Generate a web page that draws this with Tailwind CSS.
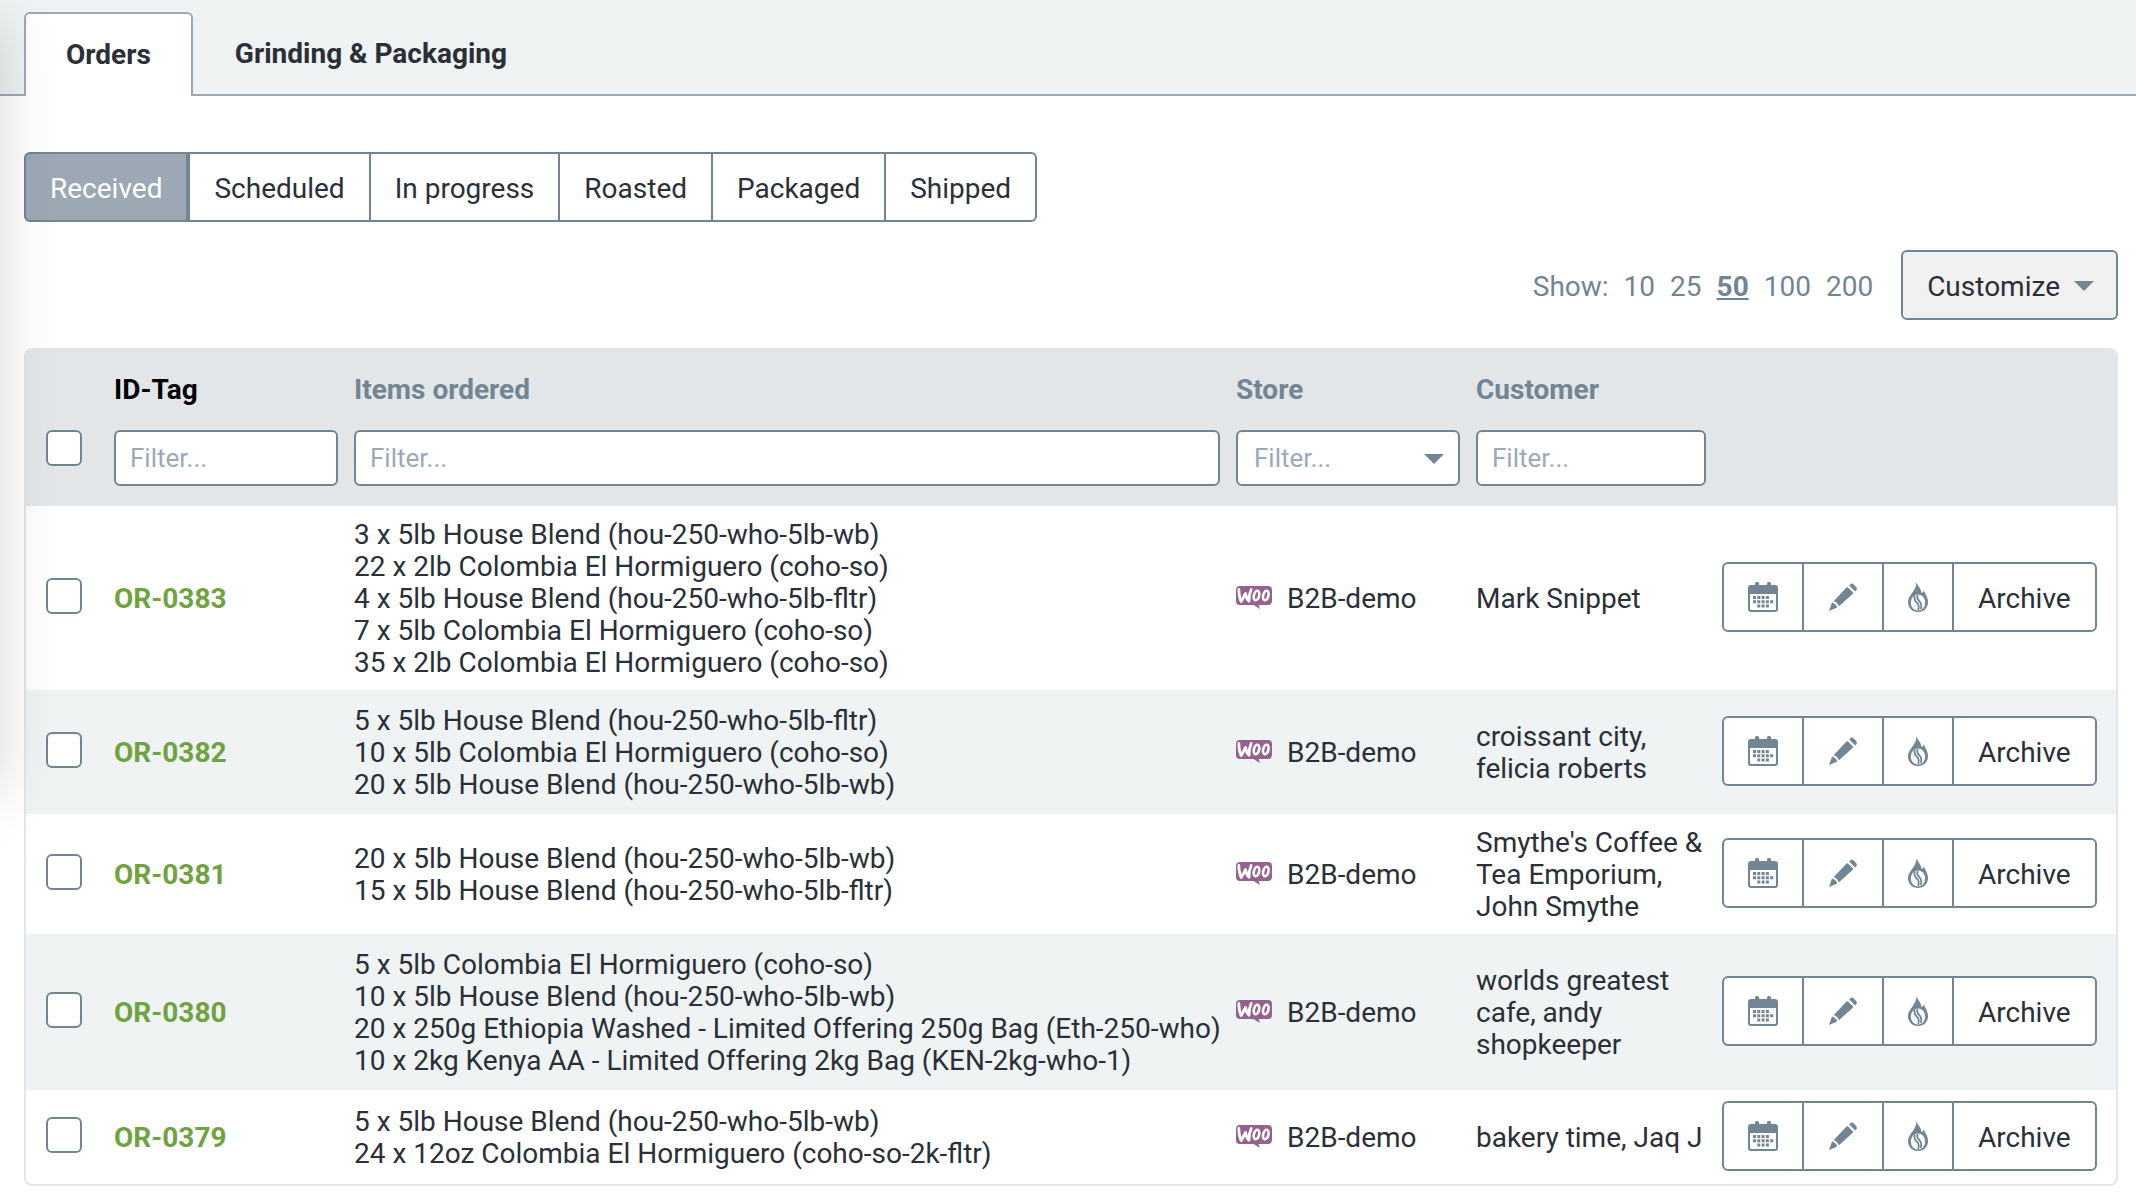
<!DOCTYPE html>
<html lang="en">

<head>
    <meta charset="UTF-8">
    <meta name="viewport" content="width=device-width, initial-scale=1.0">
    <title>Orders</title>
    <script src="https://cdn.jsdelivr.net/npm/@tailwindcss/browser@4"></script>
</head>

<body class="bg-white font-[Roboto,sans-serif] text-[28px] leading-8 text-[#2a2f38] overflow-x-hidden">
    <!-- shadow of the side menu -->
    <div class="absolute z-10 pointer-events-none top-5 -left-20 w-20 h-[775px] shadow-[0_0_60px_rgba(0,0,0,0.16)]"></div>

    <header class="bg-[#eff3f4] h-24 pt-3 pl-6 border-b-2 border-[#9ca9b5]">
        <nav class="flex h-[84px]">
            <a href="#orders"
                class="flex items-center px-10 bg-white border-2 border-b-0 border-[#9ca9b5] rounded-t-md font-bold">Orders</a>
            <a href="#grinding" class="flex items-center px-[42px] font-bold">Grinding &amp; Packaging</a>
        </nav>
    </header>

    <main class="pl-6 pr-[18px] pt-14">
        <div id="statusTabs" class="flex">
            <button class="h-[70px] px-6 pt-1 border-2 border-[#728593] rounded-l-md bg-[#9ca9b5] text-white">Received</button>
            <button class="h-[70px] px-6 pt-1 border-2 border-[#728593]">Scheduled</button>
            <button class="h-[70px] px-6 pt-1 -ml-0.5 border-2 border-[#728593]">In progress</button>
            <button class="h-[70px] px-6 pt-1 -ml-0.5 border-2 border-[#728593]">Roasted</button>
            <button class="h-[70px] px-6 pt-1 -ml-0.5 border-2 border-[#728593]">Packaged</button>
            <button class="h-[70px] px-6 pt-1 -ml-0.5 border-2 border-[#728593] rounded-r-md">Shipped</button>
        </div>

        <div class="flex justify-end items-center mt-7 text-[#728593]">
            <div class="flex gap-[15px] mr-7 pt-1">
                <span>Show:</span>
                <a href="#10">10</a>
                <a href="#25">25</a>
                <a href="#50" class="font-bold underline">50</a>
                <a href="#100">100</a>
                <a href="#200">200</a>
            </div>
            <button
                class="flex items-center gap-3.5 h-[70px] pl-6 pr-[22px] border-2 border-[#728593] rounded-md bg-[#f1f1f1] text-[#2a2f38]">
                <span class="pt-1">Customize</span>
                <svg class="w-5 h-[10px] mt-0.5 fill-[#728593]" viewBox="0 0 20 10"><path d="M0 0h20L10 10z" /></svg>
            </button>
        </div>

        <div class="mt-7 border-2 border-[#e2e6e9] rounded-lg overflow-hidden">
            <table class="w-full table-fixed">
                <colgroup>
                    <col class="w-20">
                    <col class="w-60">
                    <col>
                    <col class="w-60">
                    <col class="w-[246px]">
                    <col class="w-[402px]">
                </colgroup>
                <thead class="bg-[#e2e6e9] text-left text-[#728593]">
                    <tr class="h-20">
                        <th></th>
                        <th class="px-2 text-black"><label for="filterId">ID-Tag</label></th>
                        <th class="px-2"><label for="filterItems">Items ordered</label></th>
                        <th class="px-2"><label for="filterStore">Store</label></th>
                        <th class="px-2"><label for="filterCustomer">Customer</label></th>
                        <th></th>
                    </tr>
                    <tr class="h-[76px] align-top font-normal">
                        <td class="pl-5"><input type="checkbox" aria-label="Select all"
                                class="block appearance-none size-9 border-2 border-[#728593] rounded-md bg-white"></td>
                        <td class="px-2"><input id="filterId" type="text" placeholder="Filter..."
                                class="block w-full h-14 px-3.5 border-2 border-[#728593] rounded-md bg-white text-[26px] placeholder:text-[#9ca9b5]"></td>
                        <td class="px-2"><input id="filterItems" type="text" placeholder="Filter..."
                                class="block w-full h-14 px-3.5 border-2 border-[#728593] rounded-md bg-white text-[26px] placeholder:text-[#9ca9b5]"></td>
                        <td class="px-2">
                            <div class="relative">
                                <select id="filterStore"
                                    class="block appearance-none w-full h-14 px-4 border-2 border-[#728593] rounded-md bg-white text-[26px] text-[#9ca9b5]">
                                    <option>Filter...</option>
                                    <option>B2B-demo</option>
                                </select>
                                <svg class="absolute right-4 top-6 w-5 h-[10px] fill-[#728593] pointer-events-none"
                                    viewBox="0 0 20 10"><path d="M0 0h20L10 10z" /></svg>
                            </div>
                        </td>
                        <td class="px-2"><input id="filterCustomer" type="text" placeholder="Filter..."
                                class="block w-full h-14 px-3.5 border-2 border-[#728593] rounded-md bg-white text-[26px] placeholder:text-[#9ca9b5]"></td>
                        <td></td>
                    </tr>
                </thead>
                <tbody id="orderRows"></tbody>
            </table>
        </div>
    </main>

    <svg class="hidden">
        <symbol id="calendar" viewBox="0 0 30 30">
            <path fill-rule="evenodd"
                d="M3 3h4V1.500a1.500 1.500 0 0 1 1.500-1.500h1a1.500 1.500 0 0 1 1.500 1.500V3h8V1.500a1.500 1.500 0 0 1 1.500-1.500h1a1.500 1.500 0 0 1 1.500 1.500V3h4a3 3 0 0 1 3 3v21a3 3 0 0 1-3 3H3a3 3 0 0 1-3-3V6a3 3 0 0 1 3-3zM2 12v15a1 1 0 0 0 1 1h24a1 1 0 0 0 1-1V12z" />
            <path
                d="M5 14h3v3H5zM9.300 14h3v3h-3zM13.600 14h3v3h-3zM17.900 14h3v3h-3zM5 18.200h3v3H5zM9.300 18.200h3v3h-3zM13.600 18.200h3v3h-3zM17.900 18.200h3v3h-3zM22.200 18.200h3v3h-3zM9.300 22.400h3v3h-3zM13.600 22.400h3v3h-3zM17.900 22.400h3v3h-3z" />
        </symbol>
        <symbol id="pencil" viewBox="0 0 28 28">
            <path
                d="M17.500 4.500q.8-.6 1.500 0l4.800 4.700q.6.8 0 1.500L10 23.200Q8.500 19.500 4.800 18zM3 19.500q4 1.200 5.300 5L0 28zM20.800 1.700Q22.500-.4 24.400 1.300l2.500 2.500q1.900 2 .1 4-.8.700-1.500 0l-4.800-4.700q-.5-.7.100-1.400z" />
        </symbol>
        <symbol id="flame" viewBox="0 0 20 30">
            <path
                d="M8.500 0c.5 3.500 4.700 6 5 11C15 10.500 15.800 9.500 15.800 8c1 3.500 4.200 7 4.200 12 0 6-4.300 10-10 10S0 26 0 20C0 13 8.500 9 8.500 0z" />
            <ellipse cx="10" cy="20.500" rx="7.200" ry="8" fill="#fff" />
            <path fill="none" stroke="#728593" stroke-width="1.800"
                d="M6.800 13.500c-1.200 4 .2 5.500 2.200 7.200s2.200 4 1.200 7.300M9.500 13c-1 3 0 4.500 1.800 6.200 2.200 2.200 2.500 4.500 1.500 7.800" />
        </symbol>
        <symbol id="woo" viewBox="0 0 36 23">
            <path fill="#94628f"
                d="M4 0h28a4 4 0 0 1 4 4v11a4 4 0 0 1-4 4h-9.500l1.500 4-6.500-4H4a4 4 0 0 1-4-4V4a4 4 0 0 1 4-4z" />
            <g fill="none" stroke="#fff" stroke-linecap="round" stroke-linejoin="round">
                <path stroke-width="2.800" d="M2.800 3.500C3 8.500 3.500 12.500 5.200 15.500L9.500 7.500C10 11 11 13.500 13 15.200 12.800 10.500 13.500 7 15.200 3.500" />
                <ellipse cx="20.500" cy="9.500" rx="2.600" ry="4.800" stroke-width="2.600" transform="rotate(14 20.500 9.500)" />
                <ellipse cx="29.800" cy="9.500" rx="2.600" ry="4.800" stroke-width="2.600" transform="rotate(14 29.800 9.500)" />
            </g>
        </symbol>
    </svg>

    <script>
        const orders = [
            {
                id: 'OR-0383', height: 'h-46', customer: 'Mark Snippet',
                items: ['3 x 5lb House Blend (hou-250-who-5lb-wb)', '22 x 2lb Colombia El Hormiguero (coho-so)', '4 x 5lb House Blend (hou-250-who-5lb-fltr)', '7 x 5lb Colombia El Hormiguero (coho-so)', '35 x 2lb Colombia El Hormiguero (coho-so)']
            },
            {
                id: 'OR-0382', height: 'h-31', customer: 'croissant city, felicia roberts',
                items: ['5 x 5lb House Blend (hou-250-who-5lb-fltr)', '10 x 5lb Colombia El Hormiguero (coho-so)', '20 x 5lb House Blend (hou-250-who-5lb-wb)']
            },
            {
                id: 'OR-0381', height: 'h-30', customer: "Smythe's Coffee &amp; Tea Emporium, John Smythe",
                items: ['20 x 5lb House Blend (hou-250-who-5lb-wb)', '15 x 5lb House Blend (hou-250-who-5lb-fltr)']
            },
            {
                id: 'OR-0380', height: 'h-39', customer: 'worlds greatest cafe, andy shopkeeper',
                items: ['5 x 5lb Colombia El Hormiguero (coho-so)', '10 x 5lb House Blend (hou-250-who-5lb-wb)', '20 x 250g Ethiopia Washed - Limited Offering 250g Bag (Eth-250-who)', '10 x 2kg Kenya AA - Limited Offering 2kg Bag (KEN-2kg-who-1)']
            },
            {
                id: 'OR-0379', height: 'h-[94px]', customer: 'bakery time, Jaq J',
                items: ['5 x 5lb House Blend (hou-250-who-5lb-wb)', '24 x 12oz Colombia El Hormiguero (coho-so-2k-fltr)']
            }
        ];

        document.getElementById('orderRows').innerHTML = orders.map(order => `
            <tr class="${order.height} even:bg-[#eff3f4]">
                <td class="pl-5 pb-1"><input type="checkbox" aria-label="Select ${order.id}"
                    class="block appearance-none size-9 border-2 border-[#728593] rounded-md bg-white"></td>
                <td class="px-2 pt-0.5"><a href="#${order.id}" class="font-bold text-[#70a33f]">${order.id}</a></td>
                <td class="pl-2 pt-0.5 whitespace-nowrap">${order.items.map(item => `<div>${item}</div>`).join('')}</td>
                <td class="px-2 pt-0.5">
                    <div class="flex items-center gap-[15px]">
                        <svg class="w-9 h-[23px] mb-1"><use href="#woo" /></svg>B2B-demo
                    </div>
                </td>
                <td class="px-2 pt-0.5">${order.customer}</td>
                <td class="px-2 pb-0.5">
                    <div class="flex">
                        <button aria-label="Schedule" class="h-[70px] px-6 border-2 border-[#728593] rounded-l-md bg-white">
                            <svg class="w-[30px] h-[30px] fill-[#728593]"><use href="#calendar" /></svg></button>
                        <button aria-label="Edit" class="h-[70px] px-[25px] -ml-0.5 border-2 border-[#728593] bg-white">
                            <svg class="size-7 fill-[#728593]"><use href="#pencil" /></svg></button>
                        <button aria-label="Roast" class="h-[70px] px-6 -ml-0.5 border-2 border-[#728593] bg-white">
                            <svg class="w-5 h-[30px] fill-[#728593]"><use href="#flame" /></svg></button>
                        <button class="h-[70px] px-6 pt-1 -ml-0.5 border-2 border-[#728593] rounded-r-md bg-white">Archive</button>
                    </div>
                </td>
            </tr>`).join('');
    </script>
</body>

</html>
